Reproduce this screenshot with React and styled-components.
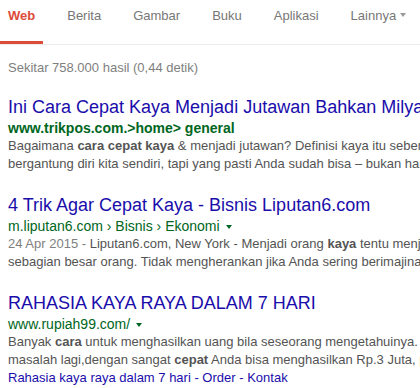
import React from 'react';
import styled, { createGlobalStyle } from 'styled-components';

const Global = createGlobalStyle`
  html, body { margin: 0; padding: 0; background: #fff; overflow: hidden; }
  body { font-family: "Liberation Sans", Arial, sans-serif; }
`;

const Page = styled.div`
  width: 420px;
  height: 388px;
  overflow: hidden;
`;

const TabBar = styled.nav`
  display: flex;
  height: 44px;
  border-bottom: 1px solid #ebebeb;
  white-space: nowrap;
`;

const Tab = styled.div`
  display: flex;
  align-items: flex-start;
  padding: 0 8px;
  margin-right: 16px;
  height: 41px;
  line-height: 31px;
  font-size: 13px;
  color: ${p => (p.$active ? '#dd4b39' : '#777')};
  font-weight: ${p => (p.$active ? 'bold' : 'normal')};
  border-bottom: 3px solid ${p => (p.$active ? '#dd4b39' : 'transparent')};
`;

const Caret = styled.span`
  display: inline-block;
  width: 0;
  height: 0;
  margin-left: ${p => p.$gap || 4}px;
  border-left: 3.5px solid transparent;
  border-right: 3.5px solid transparent;
  border-top: 4px solid ${p => p.$color || '#909090'};
  vertical-align: middle;
`;

const TabCaret = styled(Caret)`
  margin-top: 13px;
`;

const Stats = styled.div`
  margin: 15px 0 0 8px;
  font-size: 13px;
  line-height: 16px;
  color: #808080;
  white-space: nowrap;
`;

const Results = styled.div`
  margin-top: 20px;
  padding-left: 8px;
`;

const Result = styled.div`
  margin-bottom: 21px;
  white-space: nowrap;
`;

const Title = styled.div`
  font-size: 18px;
  line-height: 23px;
  color: #1a0dab;
`;

const Url = styled.div`
  font-size: 14px;
  line-height: 18px;
  color: #006621;
  font-weight: ${p => (p.$bold ? 'bold' : 'normal')};
`;

const Snippet = styled.div`
  font-size: 13px;
  line-height: 18px;
  color: #545454;
  b { font-weight: bold; }
`;

const DateText = styled.span`
  color: #808080;
`;

const Sitelinks = styled.div`
  font-size: 13px;
  line-height: 18px;
  color: #1a0dab;
`;

const tabs = ['Web', 'Berita', 'Gambar', 'Buku', 'Aplikasi'];

export default function App() {
  return (
    <Page>
      <Global />
      <TabBar>
        {tabs.map((t, i) => (
          <Tab key={t} $active={i === 0}>{t}</Tab>
        ))}
        <Tab>
          Lainnya
          <TabCaret $color="#999" />
        </Tab>
      </TabBar>
      <Stats>Sekitar 758.000 hasil (0,44 detik)</Stats>
      <Results>
        <Result>
          <Title>Ini Cara Cepat Kaya Menjadi Jutawan Bahkan Milyarder</Title>
          <Url $bold>www.trikpos.com.&gt;home&gt; general</Url>
          <Snippet>
            Bagaimana <b>cara cepat kaya</b> &amp; menjadi jutawan? Definisi kaya itu sebenarnya relatif,
            <br />
            bergantung diri kita sendiri, tapi yang pasti Anda sudah bisa – bukan hanya bermimpi
          </Snippet>
        </Result>
        <Result>
          <Title>4 Trik Agar Cepat Kaya - Bisnis Liputan6.com</Title>
          <Url>
            m.liputan6.com › Bisnis › Ekonomi
            <Caret $color="#006621" $gap={6} />
          </Url>
          <Snippet>
            <DateText>24 Apr 2015 - </DateText>Liputan6.com, New York - Menjadi orang <b>kaya</b> tentu menjadi impian
            <br />
            sebagian besar orang. Tidak mengherankan jika Anda sering berimajinasi
          </Snippet>
        </Result>
        <Result>
          <Title>RAHASIA KAYA RAYA DALAM 7 HARI</Title>
          <Url>
            www.rupiah99.com/
            <Caret $color="#006621" $gap={6} />
          </Url>
          <Snippet>
            Banyak <b>cara</b> untuk menghasilkan uang bila seseorang mengetahuinya. Bukan
            <br />
            masalah lagi,dengan sangat <b>cepat</b> Anda bisa menghasilkan Rp.3 Juta, per hari
          </Snippet>
          <Sitelinks>Rahasia kaya raya dalam 7 hari - Order - Kontak</Sitelinks>
        </Result>
      </Results>
    </Page>
  );
}
